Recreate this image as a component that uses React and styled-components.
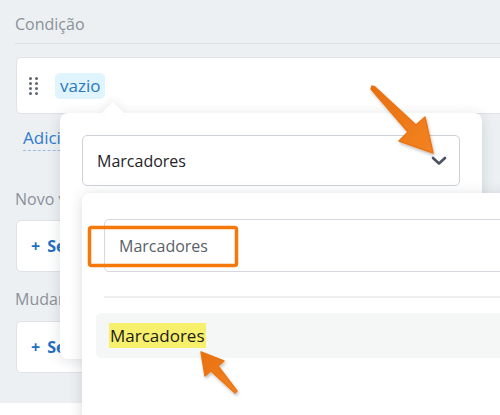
import styled, { createGlobalStyle } from 'styled-components';

const Global = createGlobalStyle`
  html, body {
    margin: 0;
    padding: 0;
    background: #ffffff;
  }
  * {
    box-sizing: border-box;
  }
`;

const Page = styled.div`
  position: relative;
  width: 500px;
  height: 415px;
  overflow: hidden;
  background: #ffffff;
  font-family: 'Open Sans', 'Noto Sans', sans-serif;
`;

const Panel = styled.div`
  background: #ecf0f3;
  height: 403px;
  padding-left: 15px;
  display: flex;
  flex-direction: column;
`;

const Heading = styled.div`
  color: #8b9199;
  font-size: 16px;
  line-height: 24px;
  padding: ${(p) => (p.$divider ? '12px 0 7px' : '0')};
  margin-top: ${(p) => p.$top || 0}px;
  border-bottom: ${(p) => (p.$divider ? '1px solid #dce1e6' : 'none')};
`;

const Card = styled.div`
  display: flex;
  align-items: center;
  gap: 17px;
  background: #ffffff;
  border: 1px solid #dfe3e8;
  border-radius: 5px;
  height: ${(p) => p.$h}px;
  margin: ${(p) => p.$top}px 0 0 1px;
  padding-left: 12px;
  width: 520px;
`;

const Handle = styled.div`
  display: grid;
  grid-template-columns: 3px 3px;
  grid-auto-rows: 3px;
  column-gap: 3px;
  row-gap: 2px;
  span {
    background: #5f6670;
    border-radius: 50%;
  }
`;

const Chip = styled.span`
  background: #e0f4fd;
  color: #2b78bf;
  font-size: 17px;
  line-height: 26px;
  padding: 0 5px;
  border-radius: 5px;
`;

const AddLink = styled.span`
  align-self: flex-start;
  margin: 12px 0 0 8px;
  color: #2f7bcf;
  font-size: 17px;
  line-height: 24px;
  border-bottom: 1px dashed #9ebbe0;
`;

const AddButton = styled.span`
  color: #1e6fc6;
  font-weight: 700;
  font-size: 16px;
  margin-left: 2px;
  word-spacing: 3px;
`;

const Popover = styled.div`
  position: absolute;
  left: 60px;
  top: 113px;
  width: 422px;
  height: 246px;
  background: #ffffff;
  border-radius: 8px;
  box-shadow: 0 2px 14px rgba(30, 40, 60, 0.14);
  padding: 22px;
  &::before {
    content: '';
    position: absolute;
    left: 45px;
    top: -8px;
    width: 16px;
    height: 16px;
    background: #ffffff;
    transform: rotate(45deg);
    box-shadow: -3px -3px 8px rgba(30, 40, 60, 0.06);
  }
`;

const Select = styled.div`
  position: relative;
  display: flex;
  align-items: center;
  justify-content: space-between;
  height: 51px;
  border: 1px solid #cdd2d9;
  border-radius: 5px;
  padding: 0 12px 0 14px;
  font-size: 16px;
  color: #1f2328;
  background: #ffffff;
`;

const Dropdown = styled.div`
  position: absolute;
  left: 82px;
  top: 193px;
  width: 440px;
  height: 240px;
  background: #ffffff;
  border-radius: 8px 0 0 0;
  box-shadow: 0 2px 14px rgba(30, 40, 60, 0.16);
  padding: 26px 0 0 22px;
  display: flex;
  flex-direction: column;
`;

const Search = styled.div`
  height: 53px;
  border: 1px solid #d5d9df;
  border-radius: 5px;
  display: flex;
  align-items: center;
  padding-left: 14px;
  font-size: 16px;
  color: #5a5f66;
`;

const Divider = styled.div`
  height: 2px;
  background: #eceef0;
  margin-top: 24px;
`;

const Option = styled.div`
  margin: 15px 0 0 -8px;
  height: 45px;
  background: #f5f7f7;
  border-radius: 5px;
  display: flex;
  align-items: center;
  padding-left: 13px;
`;

const Match = styled.mark`
  background: #f7f06c;
  color: #1c1c1c;
  font-size: 17px;
  line-height: 25px;
  padding: 0 1px;
`;

const Annotation = styled.svg`
  position: absolute;
  left: 0;
  top: 0;
  pointer-events: none;
`;

function Chevron() {
  return (
    <svg width="16" height="10" viewBox="0 0 16 10">
      <path d="M2 2 L8 7.5 L14 2" fill="none" stroke="#4a5260" strokeWidth="2.6" strokeLinecap="round" strokeLinejoin="round" />
    </svg>
  );
}

export default function App() {
  return (
    <Page>
      <Global />
      <Panel>
        <Heading $divider>Condição</Heading>
        <Card $h={57} $top={13}>
          <Handle>
            {Array.from({ length: 8 }).map((_, i) => (
              <span key={i} />
            ))}
          </Handle>
          <Chip>vazio</Chip>
        </Card>
        <AddLink>Adicionar condição</AddLink>
        <Heading $top={36}>Novo valor</Heading>
        <Card $h={52} $top={9}>
          <AddButton>+ Selecionar</AddButton>
        </Card>
        <Heading $top={15}>Mudar para</Heading>
        <Card $h={52} $top={10}>
          <AddButton>+ Selecionar</AddButton>
        </Card>
      </Panel>

      <Popover>
        <Select>
          Marcadores
          <Chevron />
        </Select>
      </Popover>

      <Dropdown>
        <Search>Marcadores</Search>
        <Divider />
        <Option>
          <Match>Marcadores</Match>
        </Option>
      </Dropdown>

      <Annotation width="500" height="415" viewBox="0 0 500 415">
        <defs>
          <linearGradient id="orange" x1="0" y1="0" x2="1" y2="1">
            <stop offset="0" stopColor="#e8700f" />
            <stop offset="1" stopColor="#f28322" />
          </linearGradient>
          <filter id="drop" x="-20%" y="-20%" width="140%" height="140%">
            <feDropShadow dx="1" dy="2" stdDeviation="1.5" floodColor="#000" floodOpacity="0.25" />
          </filter>
        </defs>
        <rect x="89.5" y="227.5" width="147" height="38" rx="2" fill="none" stroke="#f7780a" strokeWidth="3.5" />
        <polygon
          points="372,86 375,87 416,125 425,117 433,153 399,141 408,132 371,89"
          fill="url(#orange)"
          strokeLinejoin="round"
          stroke="#ea7412"
          strokeWidth="1.5"
          filter="url(#drop)"
        />
        <polygon
          points="201,352 224,361 218,366 237,391 235,393 211,371 205,376"
          fill="url(#orange)"
          strokeLinejoin="round"
          stroke="#ea7412"
          strokeWidth="1.5"
          filter="url(#drop)"
        />
      </Annotation>
    </Page>
  );
}
